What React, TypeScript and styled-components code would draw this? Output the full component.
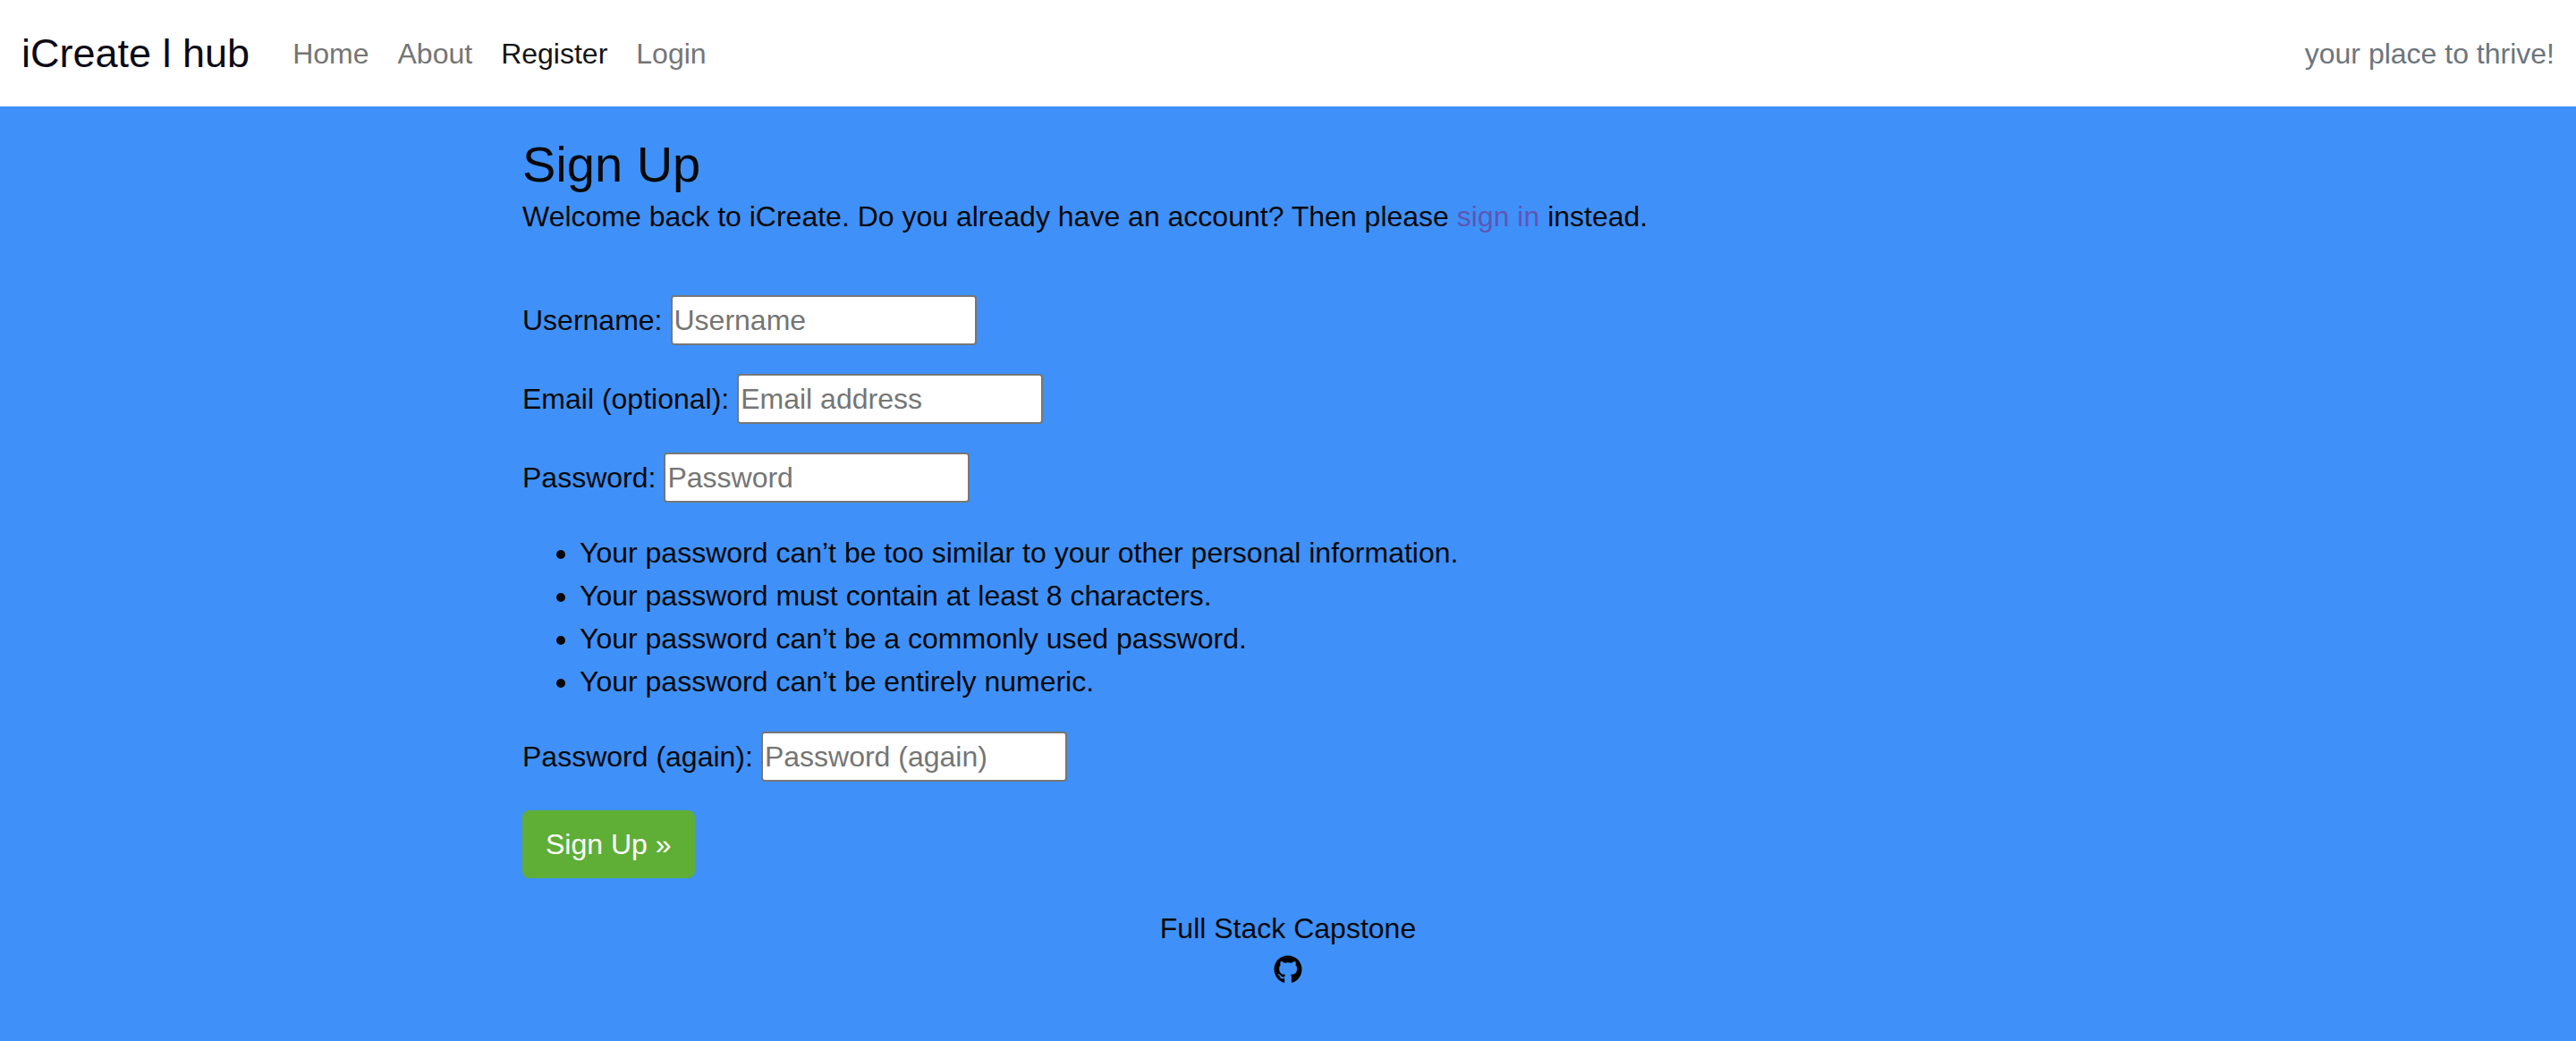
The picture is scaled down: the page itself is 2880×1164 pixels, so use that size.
import React from "react";
import styled, { createGlobalStyle, css } from "styled-components";
import { FaGithub } from "react-icons/fa";

const GlobalStyle = createGlobalStyle`
  *, *::before, *::after { box-sizing: border-box; }
  html, body { min-height: 100%; }
  body {
    margin: 0;
    background: #3f91f9;
    color: #080808;
    font-family: "Liberation Sans", Arial, sans-serif;
    font-size: 32px;
    line-height: 48px;
  }
`;

const Navbar = styled.nav`
  display: flex;
  align-items: center;
  padding: 16px 24px;
  background: #fff;
`;

const Brand = styled.a`
  margin-right: 32px;
  padding: 10px 0;
  color: #0b0a17;
  font-size: 45px;
  line-height: 67px;
  text-decoration: none;
`;

const NavList = styled.ul`
  display: flex;
  flex: 1;
  margin: 0;
  padding: 0;
  list-style: none;
`;

const NavLink = styled.a<{ $active?: boolean }>`
  display: block;
  padding: 16px;
  text-decoration: none;
  color: #757575;
  ${(p) => p.$active && css`color: #141414;`}
`;

const Tagline = styled.span`
  color: #6c757d;
`;

const Main = styled.main`
  width: 100%;
  max-width: 1760px;
  margin: 0 auto;
  padding: 32px 24px 0;
`;

const Title = styled.h1`
  margin: 0 0 2px;
  font-size: 56px;
  font-weight: 400;
  line-height: 65px;
`;

const Intro = styled.p`
  margin: 0 0 64px;
`;

const SignInLink = styled.a`
  color: #5f55b5;
  text-decoration: none;
`;

const Form = styled.form`
  display: flex;
  flex-direction: column;
  align-items: flex-start;
  gap: 32px;
`;

const Field = styled.div`
  display: flex;
  align-items: center;
  gap: 9px;
`;

const Input = styled.input`
  width: 342px;
  height: 56px;
  padding: 2px;
  border: 2px solid #767676;
  border-radius: 4px;
  background: #fff;
  font: inherit;
  &::placeholder { color: #757575; opacity: 1; }
`;

const Hints = styled.ul`
  margin: 0;
  padding-left: 64px;
`;

const Submit = styled.button`
  padding: 12px 24px;
  border: 2px solid #5fae36;
  border-radius: 8px;
  background: #5fae36;
  color: #fff;
  font: inherit;
`;

const Footer = styled.footer`
  display: flex;
  flex-direction: column;
  align-items: center;
  padding: 32px 24px 48px;
`;

const RepoLink = styled.a`
  display: flex;
  align-items: center;
  height: 44px;
  color: #000;
`;

const links = ["Home", "About", "Register", "Login"];

const hints = [
  "Your password can’t be too similar to your other personal information.",
  "Your password must contain at least 8 characters.",
  "Your password can’t be a commonly used password.",
  "Your password can’t be entirely numeric.",
];

function TextField({ id, label, placeholder, type = "text" }: {
  id: string; label: string; placeholder: string; type?: string;
}) {
  return (
    <Field>
      <label htmlFor={id}>{label}</label>
      <Input id={id} name={id} type={type} placeholder={placeholder} />
    </Field>
  );
}

export default function App() {
  return (
    <>
      <GlobalStyle />
      <Navbar>
        <Brand href="#home">iCreate l hub</Brand>
        <NavList>
          {links.map((name) => (
            <li key={name}>
              <NavLink href={`#${name.toLowerCase()}`} $active={name === "Register"}>{name}</NavLink>
            </li>
          ))}
        </NavList>
        <Tagline>your place to thrive!</Tagline>
      </Navbar>
      <Main>
        <Title>Sign Up</Title>
        <Intro>
          Welcome back to iCreate. Do you already have an account? Then please{" "}
          <SignInLink href="#login">sign in</SignInLink> instead.
        </Intro>
        <Form onSubmit={(e) => e.preventDefault()}>
          <TextField id="username" label="Username:" placeholder="Username" />
          <TextField id="email" label="Email (optional):" placeholder="Email address" type="email" />
          <TextField id="password1" label="Password:" placeholder="Password" type="password" />
          <Hints>
            {hints.map((hint) => <li key={hint}>{hint}</li>)}
          </Hints>
          <TextField id="password2" label="Password (again):" placeholder="Password (again)" type="password" />
          <Submit type="submit">Sign Up »</Submit>
        </Form>
      </Main>
      <Footer>
        <span>Full Stack Capstone</span>
        <RepoLink href="#github" aria-label="GitHub"><FaGithub size={32} /></RepoLink>
      </Footer>
    </>
  );
}
